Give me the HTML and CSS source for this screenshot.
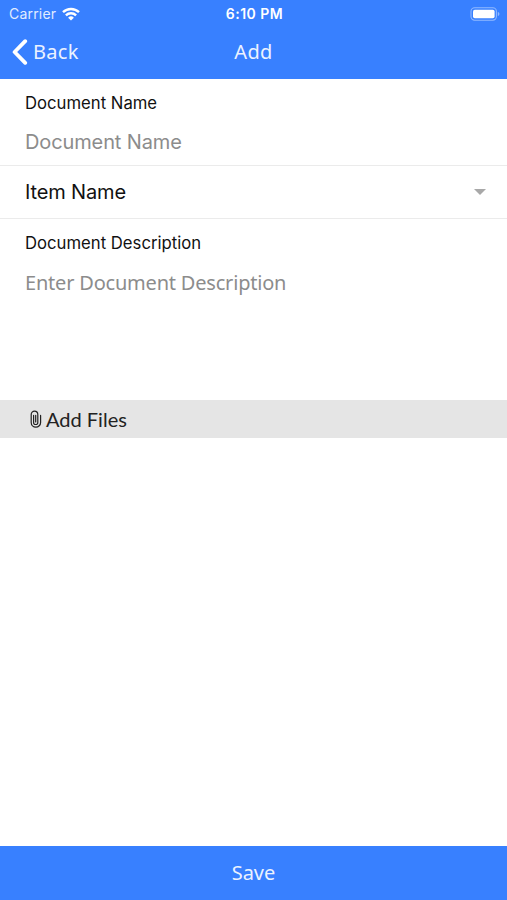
FILE: index.html
```html
<!DOCTYPE html>
<html lang="en">
<head>
  <meta charset="UTF-8">
  <meta name="viewport" content="width=device-width, initial-scale=1">
  <title>Add</title>
  <link rel="stylesheet" href="styles.css">
</head>
<body>
  <div class="screen">
    <header class="header">
      <div class="status-bar">
        <div class="carrier">
          <span class="carrier-name">Carrier</span>
          <svg class="wifi" width="18" height="14" viewBox="0 0 18 14" fill="none" stroke="#fff" stroke-width="2.4">
            <path d="M1 5.2a11.6 11.6 0 0 1 16 0"/>
            <path d="M3.9 8.3a7.3 7.3 0 0 1 10.2 0"/>
            <path d="M9 13.6 6.1 10.7a4.2 4.2 0 0 1 5.8 0z" fill="#fff" stroke="none"/>
          </svg>
        </div>
        <span class="time">6:10 PM</span>
        <svg class="battery" width="30" height="14" viewBox="0 0 30 14">
          <rect x="1" y=".8" width="25.4" height="12.4" rx="3.6" fill="none" stroke="#fff" stroke-opacity=".45" stroke-width="1.1"/>
          <rect x="3" y="2.8" width="21.6" height="8.4" rx="1.8" fill="#fff"/>
          <path d="M27.8 5v4c1-.4 1.6-1.1 1.6-2s-.6-1.6-1.6-2z" fill="#fff" fill-opacity=".45"/>
        </svg>
      </div>
      <nav class="nav-bar">
        <a class="back" href="#">
          <svg width="16" height="26" viewBox="0 0 16 26" fill="none" stroke="#fff" stroke-width="3.8" stroke-linecap="round" stroke-linejoin="round">
            <path d="M13.2 2.2 2.6 13l10.6 10.8"/>
          </svg>
          <span class="back-text">Back</span>
        </a>
        <h1 class="title">Add</h1>
      </nav>
    </header>

    <form class="form">
      <div class="field name-field">
        <label for="docName">Document Name</label>
        <input type="text" id="docName" placeholder="Document Name">
      </div>
      <div class="field item-field">
        <span class="item-name">Item Name</span>
        <span class="arrow"></span>
      </div>
      <div class="field description-field">
        <label for="docDescription">Document Description</label>
        <textarea id="docDescription" placeholder="Enter Document Description"></textarea>
      </div>
    </form>

    <div class="add-files">
      <svg width="12" height="18" viewBox="0 0 12 18" fill="none" stroke="#222" stroke-width="1.2" stroke-linecap="round">
        <path d="M3.6 5.4v7a2.1 2.1 0 0 0 4.2 0V4.4a3.3 3.3 0 0 0-6.6 0v8a4.7 4.7 0 0 0 9.4 0V5.4"/>
        <path d="M5.7 5.4v6.6"/>
      </svg>
      <span class="add-files-text">Add Files</span>
    </div>

    <div class="files"></div>

    <button type="button" class="save"><span class="save-text">Save</span></button>
  </div>
</body>
</html>
```
FILE: styles.css
```css
* {
  margin: 0;
  padding: 0;
  box-sizing: border-box;
}
body {
  font-family: Inter, "Liberation Sans", sans-serif;
  background-color: #fff;
  color: #111;
}
.screen {
  display: flex;
  flex-direction: column;
  height: 100vh;
}

/* Header */
.header {
  height: 79px;
  background-color: #3880ff;
  color: #fff;
}
.status-bar {
  display: grid;
  grid-template-columns: 1fr auto 1fr;
  align-items: center;
  height: 27px;
  padding: 0 7px 0 9px;
}
.carrier {
  display: flex;
  align-items: center;
  gap: 6px;
}
.carrier-name {
  font-size: 14px;
  letter-spacing: 0.2px;
  opacity: 0.85;
}
.time {
  font-size: 14px;
  font-weight: 600;
  letter-spacing: 0.5px;
}
.battery {
  justify-self: end;
}
.nav-bar {
  display: grid;
  grid-template-columns: 1fr auto 1fr;
  align-items: center;
  height: 50px;
  padding: 0 12px;
}
.back {
  display: flex;
  align-items: center;
  gap: 5px;
  color: #fff;
  text-decoration: none;
}
.back-text, .title, .save-text {
  font-family: "Noto Sans", sans-serif;
  font-size: 20px;
  font-weight: 400;
  line-height: 26px;
  opacity: 0.9;
}
.back-text, .title {
  letter-spacing: 0.3px;
}

/* Form */
.form {
  height: 321px;
}
.field {
  padding: 0 21px 0 25px;
}
.field label {
  display: block;
  font-size: 16.7px;
  line-height: 20px;
}
.name-field {
  height: 87px;
  padding-top: 14px;
  border-bottom: 1px solid #ebebeb;
}
.item-field {
  display: flex;
  align-items: center;
  justify-content: space-between;
  height: 53px;
  border-bottom: 1px solid #ebebeb;
}
.item-name {
  font-size: 20px;
  letter-spacing: -0.15px;
}
.arrow {
  border: 6px solid transparent;
  border-top-color: #a8a8a8;
  border-bottom: 0;
}
.description-field {
  padding-top: 14px;
}
input, textarea {
  display: block;
  width: 100%;
  border: 0;
  outline: 0;
  background: none;
  resize: none;
  font-size: 20px;
  line-height: 26px;
}
input {
  height: 26px;
  margin-top: 16px;
  font-family: Inter, sans-serif;
  letter-spacing: -0.12px;
}
textarea {
  height: 110px;
  margin-top: 17px;
  font-family: "Noto Sans", sans-serif;
  letter-spacing: -0.2px;
}
input::placeholder, textarea::placeholder {
  color: #8c8c8c;
}

/* Files */
.add-files {
  display: flex;
  align-items: center;
  gap: 4px;
  height: 38px;
  padding-left: 30px;
  background-color: #e5e5e5;
}
.add-files-text {
  font-family: Lato, sans-serif;
  font-size: 20px;
  color: #222;
}
.files {
  flex: 1;
}
.save {
  height: 54px;
  border: 0;
  background-color: #3880ff;
  color: #fff;
}
```
